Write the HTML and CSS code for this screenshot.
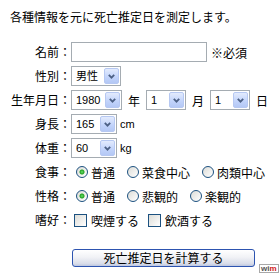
FILE: index.html
```html
<!DOCTYPE html>
<html lang="ja">
<head>
    <meta charset="UTF-8">
    <meta name="viewport" content="width=device-width, initial-scale=1.0">
    <title>死亡推定日</title>
    <link rel="stylesheet" href="styles.css">
</head>
<body>
    <p class="lead">各種情報を元に死亡推定日を測定します。</p>

    <!-- 入力フォーム -->
    <form class="form">
        <label class="key" for="name">名前：</label>
        <div class="val">
            <input id="name" class="text" type="text">
            <span class="note">※必須</span>
        </div>

        <label class="key" for="sex">性別：</label>
        <div class="val">
            <span class="combo w-sex">
                <select id="sex"><option>男性</option><option>女性</option></select>
                <span class="drop"><svg width="7" height="5" viewBox="0 0 7 5"><polyline points="0.8,0.8 3.5,3.6 6.2,0.8" /></svg></span>
            </span>
        </div>

        <label class="key" for="year">生年月日：</label>
        <div class="val">
            <span class="combo w-year">
                <select id="year"><option>1980</option><option>1981</option></select>
                <span class="drop"><svg width="7" height="5" viewBox="0 0 7 5"><polyline points="0.8,0.8 3.5,3.6 6.2,0.8" /></svg></span>
            </span>
            <span class="unit">年</span>
            <span class="combo w-day">
                <select id="month"><option>1</option><option>2</option></select>
                <span class="drop"><svg width="7" height="5" viewBox="0 0 7 5"><polyline points="0.8,0.8 3.5,3.6 6.2,0.8" /></svg></span>
            </span>
            <span class="unit">月</span>
            <span class="combo w-day">
                <select id="day"><option>1</option><option>2</option></select>
                <span class="drop"><svg width="7" height="5" viewBox="0 0 7 5"><polyline points="0.8,0.8 3.5,3.6 6.2,0.8" /></svg></span>
            </span>
            <span class="unit">日</span>
        </div>

        <label class="key" for="height">身長：</label>
        <div class="val">
            <span class="combo w-num">
                <select id="height"><option>165</option><option>170</option></select>
                <span class="drop"><svg width="7" height="5" viewBox="0 0 7 5"><polyline points="0.8,0.8 3.5,3.6 6.2,0.8" /></svg></span>
            </span>
            <span class="latin">cm</span>
        </div>

        <label class="key" for="weight">体重：</label>
        <div class="val">
            <span class="combo w-num">
                <select id="weight"><option>60</option><option>65</option></select>
                <span class="drop"><svg width="7" height="5" viewBox="0 0 7 5"><polyline points="0.8,0.8 3.5,3.6 6.2,0.8" /></svg></span>
            </span>
            <span class="latin">kg</span>
        </div>

        <span class="key">食事：</span>
        <div class="val choice">
            <label class="opt"><input type="radio" name="food" checked>普通</label>
            <label class="opt"><input type="radio" name="food">菜食中心</label>
            <label class="opt"><input type="radio" name="food">肉類中心</label>
        </div>

        <span class="key">性格：</span>
        <div class="val choice">
            <label class="opt"><input type="radio" name="mind" checked>普通</label>
            <label class="opt"><input type="radio" name="mind">悲観的</label>
            <label class="opt"><input type="radio" name="mind">楽観的</label>
        </div>

        <span class="key">嗜好：</span>
        <div class="val choice">
            <label class="opt"><input type="checkbox">喫煙する</label>
            <label class="opt"><input type="checkbox">飲酒する</label>
        </div>

        <div class="submit">
            <button type="button" class="calc">死亡推定日を計算する</button>
            <span class="wim">wi<b>m</b></span>
        </div>
    </form>
</body>
</html>
```

FILE: styles.css
```css
body {
    margin: 0;
    padding: 10px 0 0 10px;
    font-family: "Noto Sans CJK JP", sans-serif;
    font-size: 12px;
    color: #000;
    background: #fff;
}
.lead {
    margin: 0;
    line-height: 14px;
}
.form {
    display: grid;
    grid-template-columns: 61px 1fr;
    row-gap: 4px;
    margin-top: 18px;
    align-items: center;
}
.key {
    text-align: right;
    white-space: nowrap;
    line-height: 14px;
}
.val {
    display: flex;
    align-items: center;
    height: 20px;
    white-space: nowrap;
}
.text {
    box-sizing: border-box;
    width: 136px;
    height: 20px;
    margin: 0;
    border: 1px solid #a5acb2;
    padding: 0 3px;
    font: inherit;
}
.note {
    margin-left: 4px;
}
.combo {
    box-sizing: border-box;
    display: inline-flex;
    height: 20px;
    padding: 1px;
    border: 1px solid #a5acb2;
    background: #fff;
}
.combo select {
    flex: 1;
    min-width: 0;
    -webkit-appearance: none;
    appearance: none;
    border: 0;
    margin: 0;
    padding: 0 0 0 3px;
    background: transparent;
    font-family: "Liberation Sans", "Noto Sans CJK JP", sans-serif;
    font-size: 11px;
    color: #000;
    outline: none;
}
.drop {
    box-sizing: border-box;
    width: 15px;
    display: flex;
    align-items: center;
    justify-content: center;
    border: 1px solid #b6c8f2;
    border-radius: 2px;
    background: linear-gradient(#e3ebfd, #c1d3fb 60%, #b4c8f5);
}
.drop polyline {
    fill: none;
    stroke: #4d6185;
    stroke-width: 1.8;
}
.w-sex { width: 50px; }
.w-year { width: 51px; }
.w-day { width: 40px; }
.w-num { width: 46px; }
.unit {
    margin: 0 6px;
}
.latin {
    margin-left: 3px;
    font-family: "Liberation Sans", sans-serif;
    font-size: 11px;
}
.opt {
    display: inline-flex;
    align-items: center;
    margin-right: 7px;
}
.opt input {
    -webkit-appearance: none;
    appearance: none;
    box-sizing: border-box;
    margin: 0 3px 0 5px;
}
.opt input[type="radio"] {
    width: 12px;
    height: 12px;
    border: 1px solid #1c5180;
    border-radius: 50%;
    background: linear-gradient(135deg, #dcdcd7, #fff);
}
.opt input[type="radio"]:checked {
    background: radial-gradient(circle, #6fe06f 0, #21a121 2px, transparent 3px), linear-gradient(135deg, #dcdcd7, #fff);
}
.opt input[type="checkbox"] {
    width: 13px;
    height: 13px;
    margin: 0 4px 0 3px;
    border: 1px solid #1c5180;
    background: linear-gradient(135deg, #dcdcd7, #fff);
}
.opt:has(input[type="checkbox"]) {
    margin-right: 6px;
}
.submit {
    grid-column: 2;
    display: flex;
    align-items: flex-end;
    margin-top: 15px;
}
.calc {
    box-sizing: border-box;
    width: 183px;
    height: 18px;
    margin: 0 4px 6px 1px;
    padding: 0;
    border: 1px solid #2d54b0;
    border-radius: 3px;
    background: linear-gradient(#ffffff, #f1f2f6 45%, #d9dde9 85%, #bcc6e0);
    font: inherit;
    line-height: 16px;
    color: #000;
}
.wim {
    box-sizing: border-box;
    height: 9px;
    padding: 0 1px;
    border: 1px solid #a8a8a8;
    font-family: "Liberation Sans", sans-serif;
    font-size: 8px;
    font-weight: bold;
    line-height: 7px;
    color: #555;
}
.wim b {
    color: #d02020;
}
```
